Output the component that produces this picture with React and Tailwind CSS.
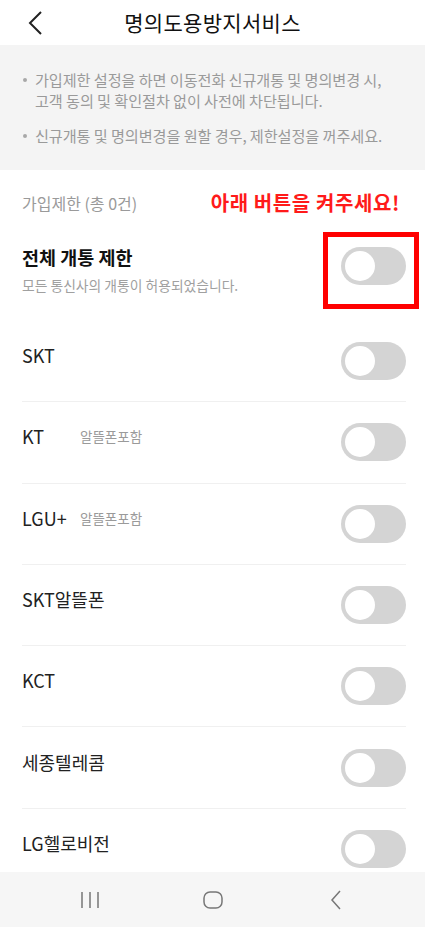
import React from 'react';

const FONT = { fontFamily: '"Noto Sans CJK KR", "Noto Sans", sans-serif' };

const carriers = [
  { name: 'SKT' },
  { name: 'KT', note: '알뜰폰포함' },
  { name: 'LGU+', note: '알뜰폰포함' },
  { name: 'SKT알뜰폰' },
  { name: 'KCT' },
  { name: '세종텔레콤' },
  { name: 'LG헬로비전' },
];

const Toggle = () => (
  <div className="w-[65px] h-[38px] rounded-full bg-[#d4d4d4] p-[2px] flex items-center shrink-0">
    <div className="w-[34px] h-[34px] rounded-full bg-white border-[2px] border-[#d4d4d4]" />
  </div>
);

const Bullet = () => (
  <span className="w-[13px] shrink-0 flex pt-[9px]">
    <span className="w-[4px] h-[4px] rounded-full bg-[#a8a8a8] ml-[1px]" />
  </span>
);

const App = () => {
  return (
    <div className="w-[425px] h-[927px] bg-white flex flex-col overflow-hidden" style={FONT}>
      {/* header */}
      <div className="h-[45px] grid grid-cols-[60px_1fr_60px] items-center shrink-0">
        <div className="pl-[27px] flex items-center">
          <svg width="16" height="26" viewBox="0 0 16 26" fill="none">
            <path d="M14 2 L3 13 L14 24" stroke="#222" strokeWidth="2" />
          </svg>
        </div>
        <div className="text-center text-[21px] text-[#111] leading-none tracking-[0.3px]">명의도용방지서비스</div>
        <div />
      </div>

      {/* notice box */}
      <div className="h-[125px] bg-[#f4f4f4] px-[22px] pt-[24px] text-[15.2px] text-[#9a9a9a] leading-[21px] shrink-0">
        <div className="flex">
          <Bullet />
          <p className="tracking-[-0.1px]">
            가입제한 설정을 하면 이동전화 신규개통 및 명의변경 시,
            <br />
            고객 동의 및 확인절차 없이 사전에 차단됩니다.
          </p>
        </div>
        <div className="flex mt-[14px]">
          <Bullet />
          <p className="tracking-[-0.1px]">신규개통 및 명의변경을 원할 경우, 제한설정을 꺼주세요.</p>
        </div>
      </div>

      <div className="flex-1 overflow-hidden px-[22px] pr-[19px]">
        {/* section label */}
        <div className="pt-[22px] flex justify-between items-center leading-[22px]">
          <span className="text-[16px] text-[#9a9a9a]">가입제한 (총 0건)</span>
          <span className="text-[20px] font-bold text-[#ff1a1a] mr-[6px] tracking-[0.6px]">아래 버튼을 켜주세요!</span>
        </div>

        {/* all carriers */}
        <div className="mt-[18px] flex justify-between items-start">
          <div className="pt-[12px]">
            <div className="text-[18.5px] font-bold text-[#111] leading-[26px]">전체 개통 제한</div>
            <div className="mt-[6px] text-[13.8px] text-[#a0a0a0] leading-[18px]">모든 통신사의 개통이 허용되었습니다.</div>
          </div>
          <div className="border-[5px] border-[#ff0000] pl-[13px] pr-[8px] pt-[10px] pb-[19px] -mr-[13px]">
            <Toggle />
          </div>
        </div>

        {/* carriers */}
        <div className="mt-[12px]">
          {carriers.map((c) => (
            <div key={c.name} className="h-[81.3px] border-b border-[#f0f0f0] flex items-center justify-between">
              <div className="flex items-center mb-[12px]">
                <span className="min-w-[58px] text-[18px] text-[#222] leading-[24px]">{c.name}</span>
                {c.note && <span className="text-[13.5px] text-[#9a9a9a]">{c.note}</span>}
              </div>
              <Toggle />
            </div>
          ))}
        </div>
      </div>

      {/* system nav */}
      <div className="h-[55px] bg-[#f6f6f6] flex items-center justify-center shrink-0">
        <div className="w-[123px] flex justify-center">
          <svg width="22" height="18" viewBox="0 0 22 18">
            <path d="M3 1 V17 M11 1 V17 M19 1 V17" stroke="#777" strokeWidth="1.5" />
          </svg>
        </div>
        <div className="w-[123px] flex justify-center">
          <svg width="20" height="18" viewBox="0 0 20 18">
            <rect x="1" y="1" width="18" height="16" rx="6" fill="none" stroke="#777" strokeWidth="1.5" />
          </svg>
        </div>
        <div className="w-[123px] flex justify-center">
          <svg width="14" height="22" viewBox="0 0 14 22">
            <path d="M11 2 L3 11 L11 20" fill="none" stroke="#777" strokeWidth="1.5" />
          </svg>
        </div>
      </div>
    </div>
  );
};

export default App;
